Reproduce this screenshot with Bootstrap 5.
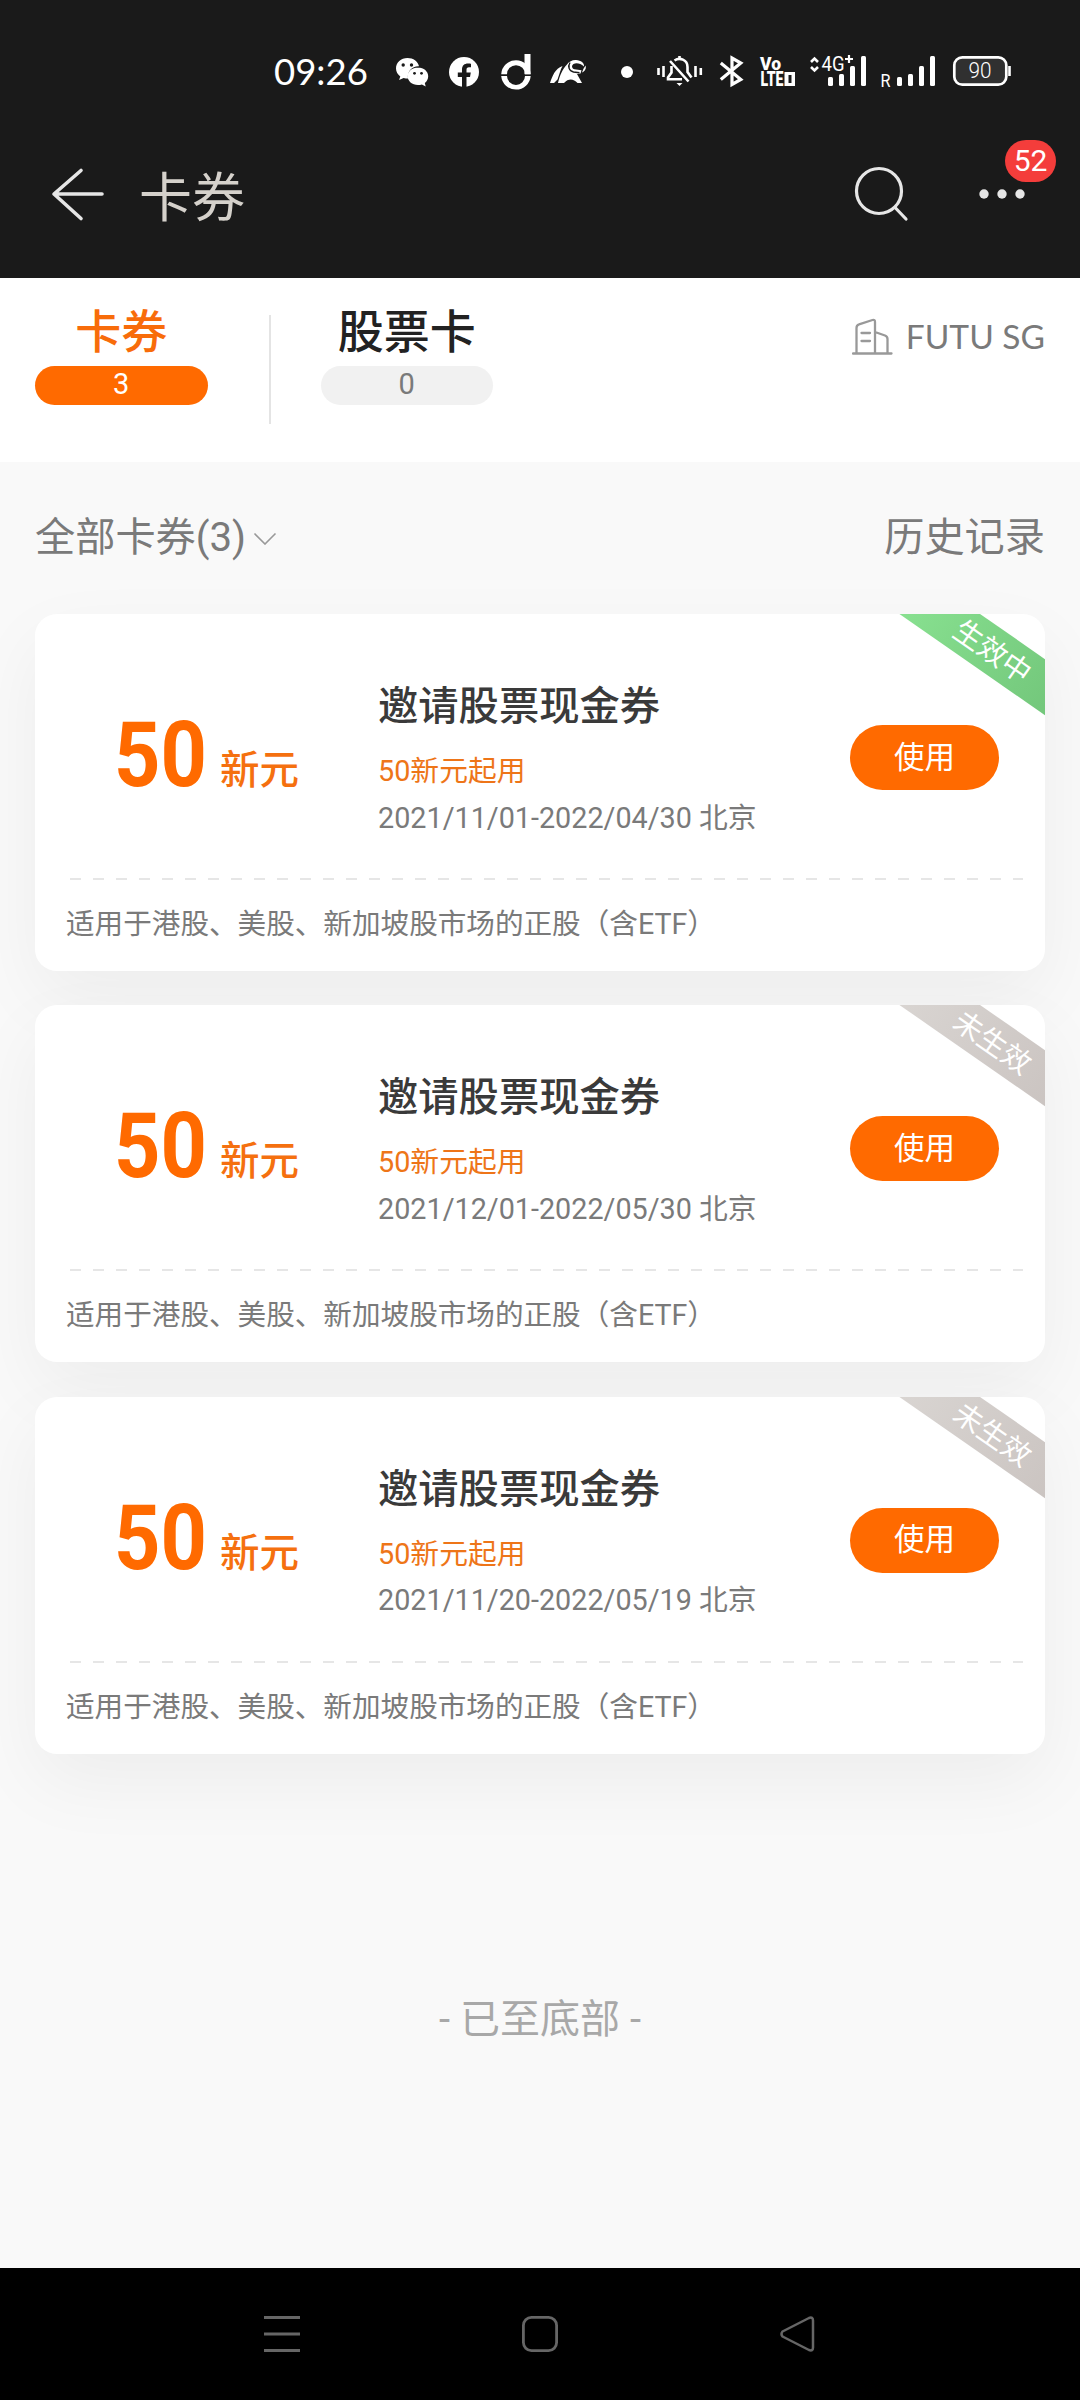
<!DOCTYPE html>
<html lang="zh-CN">
<head>
<meta charset="utf-8">
<meta name="viewport" content="width=device-width, initial-scale=1">
<title>卡券</title>
<link href="https://cdn.jsdelivr.net/npm/bootstrap@5.3.0/dist/css/bootstrap.min.css" rel="stylesheet">
<style>
  body { font-family: Roboto, "Noto Sans CJK SC", sans-serif; background: #f9f9f9; color: #7a7a7a; line-height: 1; min-height: 2400px; }
  svg { display: block; flex: none; }
  .top-area { background: #1a1a1a; height: 278px; }
  .status-bar { height: 110px; padding: 49px 0 0 274px; }
  .status-bar svg { margin-top: 1px; }
  .status-bar .clock { font: 36.5px/44px Lato, sans-serif; width: 122px; color: #fff; white-space: nowrap; }
  .title-bar { height: 168px; padding-left: 50px; }
  .page-title { font-size: 53px; line-height: 60px; color: #d5d1cb; margin-left: 33px; padding-top: 9px; }
  .notice { right: 24px; top: 30px; width: 51px; height: 42px; border-radius: 21px; background: #f43d3b; color: #fff; font: 30px/42px Roboto, sans-serif; }
  .tabs-area { height: 184px; padding: 24px 35px 0; }
  .tab-item { width: 172.500px; }
  .tab-name { font-size: 46px; line-height: 54px; font-weight: 500; color: #222; white-space: nowrap; padding-top: 3px; }
  .tab-count { height: 39px; line-height: 36px; font-size: 29px; border-radius: 20px; background: #f1f1f1; color: #7a7a7a; margin-top: 7px; }
  .active .tab-name { color: #f86c0a; }
  .active .tab-count { background: #ff6a00; color: #fff; }
  .split { width: 2px; height: 109px; background: #e4e4e4; margin: 13px 50px 0 61px; }
  .region { font: 33.5px/40px Lato, sans-serif; color: #7a7a7a; margin-top: 15px; }
  .region span { margin-left: 13px; margin-top: -2px; }
  .filter-row { padding: 0 35px; height: 152px; font-size: 40.2px; line-height: 48px; }
  .coupon-list { padding: 0 35px; gap: 34.4px; isolation: isolate; }
  .coupon { position: relative; height: 357px; }
  .coupon::before { content: ""; position: absolute; inset: 0; border-radius: 22px; z-index: -1; box-shadow: 0 28px 76px rgba(0,0,0,.05); }
  .coupon-body { height: 357px; border-radius: 22px; overflow: hidden; background: #fff; position: relative; }
  .coupon-main { height: 264px; }
  .amount-box { width: 343px; padding: 91px 0 0 79px; }
  .amount { font-size: 91px; font-weight: 700; line-height: 100px; color: #ff6a00; width: 106px; }
  .amount span { display: inline-block; transform: scaleX(.89); transform-origin: left; }
  .unit { font-size: 39.5px; font-weight: 500; color: #f5700f; line-height: 48px; position: relative; top: -2px; }
  .coupon-info { width: 472px; padding-top: 68px; white-space: nowrap; }
  .coupon-name { font-size: 40.3px; font-weight: 500; line-height: 50px; color: #3a3a3a; }
  .coupon-min { font-size: 28.8px; line-height: 40px; margin-top: 19px; color: #ee7518; }
  .coupon-date { font-size: 28.75px; line-height: 40px; margin-top: 6.5px; }
  .use-btn { width: 149px; height: 65px; margin-top: 111px; border-radius: 33px; background: #ff6a00; color: #fff; font-size: 30.5px; line-height: 62px; padding: 0; border: 0; }
  .dash { height: 2px; margin: 0 22px 0 34.500px; background: repeating-linear-gradient(90deg, #e6e6e6 0 11.5px, transparent 11.5px 23px); }
  .coupon-note { font-size: 28.6px; line-height: 40px; padding: 24px 0 0 31px; }
  .ribbon { position: absolute; width: 230px; height: 46px; left: 843px; top: 14px; transform: rotate(34.8deg); color: #fff; font-size: 29px; line-height: 48px; text-align: center; background: linear-gradient(90deg, #8ae392, #6fc277); }
  .ribbon.pending { background: linear-gradient(90deg, #dad6d3, #c8c1be); }
  .end-mark { font-size: 40px; color: #a8a8a8; line-height: 48px; margin-top: 242px; }
  .nav-keys { background: #000; height: 132px; padding: 48px 264px 0; }
</style>
<script src="https://cdn.jsdelivr.net/npm/bootstrap@5.3.0/dist/js/bootstrap.bundle.min.js"></script>
</head>
<body class="d-flex flex-column m-0">
<header class="top-area">
  <div class="status-bar d-flex align-items-start">
    <div class="clock">09:26</div>
    <!-- notification icons -->
    <svg width="231" height="44" viewBox="396 50 231 44" fill="#fff" style="overflow:visible">
      <path d="M407.500 58c-6.500 0-11.500 4.600-11.500 10.500 0 3.200 1.700 6 4.300 8l-1.200 3.500 4.500-2.100c1.400.4 2.900.6 4.400.6-1.200-7.500 4.700-12.800 11-12.300C418 61.500 413.300 58 407.500 58z"/>
      <path d="M418 67.500c-6 0-10.400 4-10.400 8.700s4.400 8.800 10.400 8.800c1.400 0 2.700-.2 3.900-.6l3.800 2-.9-3.300c2.100-1.700 3.400-4.100 3.400-6.900 0-4.700-4.300-8.700-10.200-8.700z"/>
      <g fill="#1a1a1a"><circle cx="403.200" cy="65" r="1.700"/><circle cx="411.500" cy="65" r="1.700"/><circle cx="414.500" cy="73.300" r="1.400"/><circle cx="421.500" cy="73.300" r="1.400"/></g>
      <circle cx="464" cy="72" r="15"/>
      <path d="M462 88V77h-4.200v-4.600h4.200v-3c0-4 2.400-6 6-6 1.200 0 2.400.2 3 .3v3.600h-2c-1.900 0-2.500 1.200-2.500 2.400v2.700h4.300l-.8 4.600h-3.500v11z" fill="#1a1a1a"/>
      <path d="M524.500 54h6v20.200h-6z"/>
      <path d="M516 60.200a14.800 14.800 0 0 0-14.800 14h5.800a9 9 0 0 1 18 0h5.700A14.800 14.800 0 0 0 516 60.200zM501.200 76h5.800a9 9 0 0 0 18 0h5.700a14.800 14.800 0 0 1-29.500 0z"/>
      <path d="M550 83c2.500-7 5-14.500 12.500-17-2 3.500-3 8-5 13.500l-3.500 3.500zM558 83c2-8 4.500-14 9-18.500 2-3 5.500-4.700 9-4.500 5 .3 8.500 3 8 6.500-3.500-3-7.500-4-10.500-2.500-2.500 2-1.500 4.500 1 5.300l7 .9-1 3.300-3.500.6 5 8.900h-4.500c-4-4.500-9-5-13.500 0z"/>
      <path d="M570 62.500c-2.500 4-1 8.500 3.500 9.500l6 .8" fill="none" stroke="#1a1a1a" stroke-width="1.400"/>
      <path d="M585.500 65.500c1 3-.5 5.500-3.500 7l1.500-3.800z"/>
      <circle cx="627" cy="72" r="6"/>
    </svg>
    <!-- system indicators -->
    <svg width="385" height="44" viewBox="627 50 385 44" fill="none" stroke="#fff" style="overflow:visible">
      <g stroke-width="2.600">
        <path d="M658.500 68v7M663.500 66v11M695.500 66v11M700.800 68v7M679.500 56v3M670 61l18.500 20.500M674.500 60.500c5-3.500 13-1 13 6.500v5l4 5.500"/>
        <path d="M671.500 66v6.500l-3.500 5v1.700h14"/>
      </g>
      <path d="M676.500 83h6l-3 3z" fill="#fff" stroke="none"/>
      <path d="M720.800 63l20 16.500-8.800 5V58l8.800 5-20 16.500" stroke-width="3.200" stroke-linejoin="miter"/>
      <g fill="#fff" stroke="none">
        <text x="760" y="69.500" font-family="Roboto" font-weight="900" font-size="18.500" textLength="21" lengthAdjust="spacingAndGlyphs">Vo</text>
        <text x="760.500" y="86" font-family="Roboto" font-weight="900" font-size="19.500" textLength="23" lengthAdjust="spacingAndGlyphs">LTE</text>
        <path d="M784.500 72h10.500v14h-10.500zM788.500 75v8h3v-8z" fill-rule="evenodd"/>
        <text x="821.500" y="70.500" font-family="Roboto" font-size="20" textLength="23" lengthAdjust="spacingAndGlyphs">4G</text>
        <text x="880.500" y="86.500" font-family="Roboto" font-size="17.500" textLength="10" lengthAdjust="spacingAndGlyphs">R</text>
        <rect x="828" y="77" width="5" height="9" rx="1.500"/><rect x="839" y="74" width="5" height="12" rx="1.500"/><rect x="850" y="66" width="5" height="20" rx="1.500"/><rect x="861" y="56" width="5" height="30" rx="1.500"/>
        <rect x="897" y="77" width="5" height="9" rx="1.500"/><rect x="908" y="74" width="5" height="12" rx="1.500"/><rect x="919" y="66" width="5" height="20" rx="1.500"/><rect x="930" y="56" width="5" height="30" rx="1.500"/>
      </g>
      <path d="M811 62l3.500-3.500L818 62M811 67l3.500 3.500L818 67" stroke-width="2.600"/>
      <path d="M849 55v8M845 59h8" stroke-width="2.200"/>
      <rect x="954.300" y="57.300" width="52" height="27.400" rx="8" stroke-width="2.700" fill="#303030"/>
      <path d="M1009.500 66v10" stroke-width="2.600"/>
      <text x="968.500" y="77.700" font-family="Roboto" font-weight="300" font-size="21.500" textLength="23" lengthAdjust="spacingAndGlyphs" fill="#fff" stroke="none">90</text>
    </svg>
  </div>
  <nav class="title-bar d-flex align-items-center position-relative">
    <svg width="56" height="56" viewBox="50 166 56 56" fill="none" stroke="#e6e6e6" stroke-width="3.600" stroke-linecap="round" stroke-linejoin="round"><path d="M81 170.500L54 194l27 24.500M55 194h47"/></svg>
    <h1 class="page-title fw-normal mb-0">卡券</h1>
    <svg class="ms-auto" width="60" height="60" viewBox="852 164 60 60" fill="none" stroke="#e6e6e6" stroke-width="3.200" stroke-linecap="round"><circle cx="879" cy="191" r="22.500"/><path d="M895.500 208l10.500 11"/></svg>
    <svg width="168" height="60" viewBox="912 164 168 60" fill="#e6e6e6"><circle cx="984" cy="194" r="4.700"/><circle cx="1002" cy="194" r="4.700"/><circle cx="1020" cy="194" r="4.700"/></svg>
    <span class="notice position-absolute text-center">52</span>
  </nav>
</header>

<section class="tabs-area bg-white d-flex align-items-start">
  <div class="tab-item active text-center"><div class="tab-name">卡券</div><div class="tab-count">3</div></div>
  <div class="split"></div>
  <div class="tab-item text-center"><div class="tab-name">股票卡</div><div class="tab-count">0</div></div>
  <div class="region d-flex ms-auto align-items-center">
    <svg width="41" height="40" viewBox="852 317 41 40" fill="none" stroke="#999" stroke-width="2.300" stroke-linecap="round" stroke-linejoin="round"><path d="M853 353.500h38.500M856.500 353V328q0-3 2.500-3.700l13.500-4.300q2.500-.6 2.500 2V353M875 332l10 3.500q2.500 1 2.500 3.500v14M861.500 333h8.500M861.500 341h8.500"/></svg>
    <span>FUTU SG</span>
  </div>
</section>

<section class="filter-row d-flex justify-content-between align-items-center">
  <div class="d-flex align-items-center"><span>全部卡券(3)</span>
    <svg style="margin-left:7px" width="24" height="14" viewBox="252 530 24 14" fill="none" stroke="#999" stroke-width="1.600"><path d="M253.500 532.500L264 543l10.500-10.500"/></svg></div>
  <span>历史记录</span>
</section>

<main class="coupon-list d-flex flex-column">
  <article class="coupon"><div class="coupon-body">
    <div class="coupon-main d-flex align-items-start">
      <div class="amount-box d-flex align-items-baseline"><div class="amount"><span>50</span></div><div class="unit">新元</div></div>
      <div class="coupon-info"><div class="coupon-name">邀请股票现金券</div><div class="coupon-min">50新元起用</div><div class="coupon-date">2021/11/01-2022/04/30 北京</div></div>
      <button class="btn use-btn">使用</button>
    </div>
    <div class="dash"></div>
    <div class="coupon-note">适用于港股、美股、新加坡股市场的正股（含ETF）</div>
    <div class="ribbon">生效中</div>
  </div></article>
  <article class="coupon"><div class="coupon-body">
    <div class="coupon-main d-flex align-items-start">
      <div class="amount-box d-flex align-items-baseline"><div class="amount"><span>50</span></div><div class="unit">新元</div></div>
      <div class="coupon-info"><div class="coupon-name">邀请股票现金券</div><div class="coupon-min">50新元起用</div><div class="coupon-date">2021/12/01-2022/05/30 北京</div></div>
      <button class="btn use-btn">使用</button>
    </div>
    <div class="dash"></div>
    <div class="coupon-note">适用于港股、美股、新加坡股市场的正股（含ETF）</div>
    <div class="ribbon pending">未生效</div>
  </div></article>
  <article class="coupon"><div class="coupon-body">
    <div class="coupon-main d-flex align-items-start">
      <div class="amount-box d-flex align-items-baseline"><div class="amount"><span>50</span></div><div class="unit">新元</div></div>
      <div class="coupon-info"><div class="coupon-name">邀请股票现金券</div><div class="coupon-min">50新元起用</div><div class="coupon-date">2021/11/20-2022/05/19 北京</div></div>
      <button class="btn use-btn">使用</button>
    </div>
    <div class="dash"></div>
    <div class="coupon-note">适用于港股、美股、新加坡股市场的正股（含ETF）</div>
    <div class="ribbon pending">未生效</div>
  </div></article>
</main>
<div class="end-mark text-center">- 已至底部 -</div>

<footer class="nav-keys d-flex justify-content-between align-items-start mt-auto">
  <svg width="36" height="36" viewBox="0 0 36 36" stroke="#666" stroke-width="3"><path d="M0 1.500h36M0 18h36M0 34.500h36"/></svg>
  <svg width="36" height="36" viewBox="0 0 36 36" fill="none" stroke="#666" stroke-width="2.800"><rect x="1.400" y="1.400" width="33.200" height="33.200" rx="8"/></svg>
  <svg width="36" height="36" viewBox="0 0 36 36" fill="none" stroke="#666" stroke-width="2.500" stroke-linejoin="round"><path d="M2.500 15.500L29 2q4-1.500 4 2.500v27q0 4-4 2.500L2.500 20.500q-2-2.500 0-5z"/></svg>
</footer>
</body>
</html>
